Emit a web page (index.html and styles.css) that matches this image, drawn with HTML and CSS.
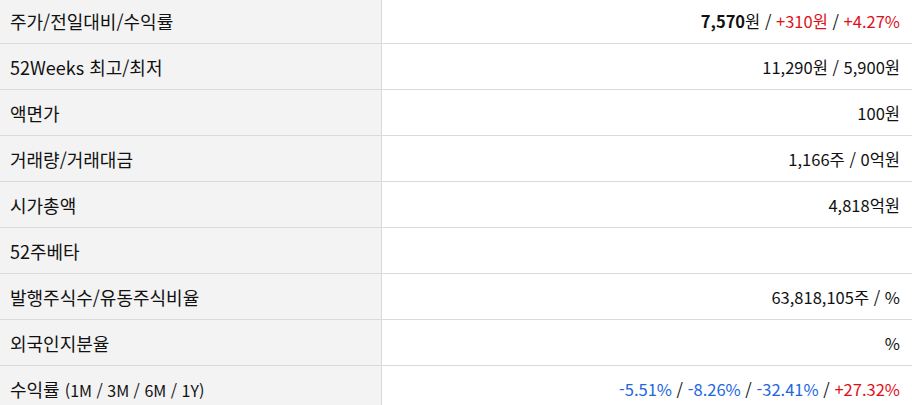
FILE: index.html
```html
<!DOCTYPE html>
<html lang="ko">
<head>
<meta charset="utf-8">
<link rel="stylesheet" href="styles.css">
</head>
<body>
<div class="wrap">
<table class="info">
  <tbody>
    <tr><th>주가/전일대비/수익률</th><td><b>7,570</b>원 / <span class="up">+310원</span> / <span class="up">+4.27%</span></td></tr>
    <tr><th>52Weeks 최고/최저</th><td>11,290원 / 5,900원</td></tr>
    <tr><th>액면가</th><td>100원</td></tr>
    <tr><th>거래량/거래대금</th><td>1,166주 / 0억원</td></tr>
    <tr><th>시가총액</th><td>4,818억원</td></tr>
    <tr><th>52주베타</th><td></td></tr>
    <tr><th>발행주식수/유동주식비율</th><td>63,818,105주 / %</td></tr>
    <tr><th>외국인지분율</th><td>%</td></tr>
    <tr><th>수익률 <span class="small">(1M / 3M / 6M / 1Y)</span></th><td><span class="down">-5.51%</span> / <span class="down">-8.26%</span> / <span class="down">-32.41%</span> / <span class="up">+27.32%</span></td></tr>
  </tbody>
</table>
</div>
</body>
</html>
```
FILE: styles.css
```css
html, body {
  margin: 0;
  padding: 0;
  background: #fff;
}
body {
  font-family: "Noto Sans CJK KR", "Noto Sans", sans-serif;
  font-size: 16px;
  color: #111;
  overflow: hidden;
}
.wrap {
  margin-top: -3px;
}
.info {
  width: 912px;
  border-collapse: collapse;
}
.info th,
.info td {
  height: 46px;
  padding: 0 10px;
  border-top: 1px solid #dadada;
  border-bottom: 1px solid #dadada;
  box-sizing: border-box;
}
.info th {
  width: 381px;
  background: #f3f3f3;
  text-align: left;
  font-weight: normal;
  font-size: 18px;
  border-right: 1px solid #dadada;
  padding-left: 10px;
}
.info td {
  text-align: right;
  padding-right: 12px;
  font-size: 16.5px;
}
.info b {
  font-weight: bold;
}
.small {
  font-size: 16px;
}
.up {
  color: #e0101a;
}
.down {
  color: #2166e0;
}
```
